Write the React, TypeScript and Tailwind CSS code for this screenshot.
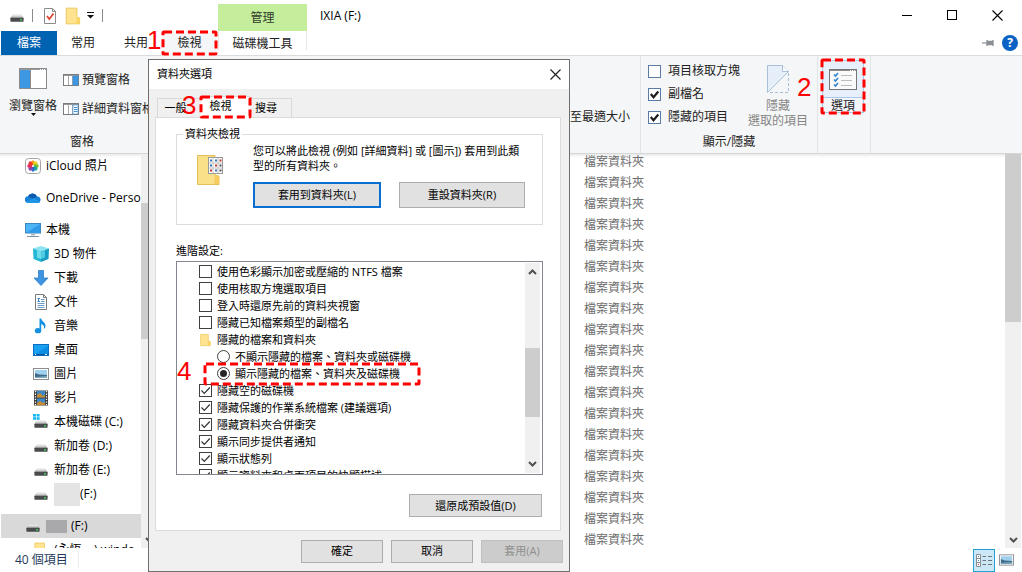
import React from "react";

function Callout({ n, className, numberClass }: { n: string; className: string; numberClass: string }) {
  return (
    <span className={`pointer-events-none absolute z-10 ${className}`}>
      <svg className="absolute inset-0 h-full w-full overflow-visible" aria-hidden="true">
        <rect width="100%" height="100%" rx="1" fill="none" stroke="#ff0000" strokeWidth="3" strokeDasharray="8 4" />
      </svg>
      <span className={`absolute font-['Liberation_Sans',sans-serif] text-[26px] leading-[26px] text-[#ff0000] ${numberClass}`}>{n}</span>
    </span>
  );
}

function DriveIcon({ windows = false }: { windows?: boolean }) {
  return (
    <svg width="16" height="16" viewBox="0 0 16 16" aria-hidden="true">
      <path d="M3.500 6.500h9l2 3h-13z" fill="#e2e2e2" />
      <path d="M2.200 8.500h11.600l.7 1.500h-13z" fill="#b4b4b4" />
      <rect x="1.400" y="9.700" width="13.200" height="4" rx=".6" fill="#4a4a4a" />
      <rect x="11" y="11.200" width="2" height="1.300" fill="#3fe05a" />
      {windows && (
        <g fill="#16b8ef">
          <rect x="0" y="0" width="3" height="2.600" />
          <rect x="3.600" y="0" width="3" height="2.600" />
          <rect x="0" y="3.200" width="3" height="2.600" />
          <rect x="3.600" y="3.200" width="3" height="2.600" />
        </g>
      )}
    </svg>
  );
}

function FolderIcon({ className = "h-4 w-4" }: { className?: string }) {
  return (
    <svg className={className} viewBox="0 0 16 16" aria-hidden="true">
      <path d="M1.900 1h9.600v8.500h2.400V15h-12z" fill="#ffe38f" stroke="#ecc65f" strokeWidth=".8" />
      <path d="M11.500 9.500h2.400V15h-3.400z" fill="#fbd467" />
    </svg>
  );
}

function PhotosIcon() {
  const petals = ["#f6a11c", "#e9d21c", "#7fbf2f", "#1fae94", "#2a6fd0", "#8446b0", "#dc2f6c", "#ee3b2a"];
  return (
    <svg width="16" height="16" viewBox="0 0 16 16" aria-hidden="true">
      <rect x=".5" y=".5" width="15" height="15" rx="3" fill="#fff" stroke="#a5a5a5" />
      {petals.map((c, i) => (
        <ellipse key={c} cx="8" cy="4.900" rx="1.900" ry="2.700" fill={c} transform={`rotate(${i * 45} 8 8)`} />
      ))}
      <circle cx="8" cy="8" r="1" fill="#fff" />
    </svg>
  );
}

function CloudIcon() {
  return (
    <svg width="16" height="16" viewBox="0 0 16 16" aria-hidden="true">
      <path d="M3.500 13a3.400 3.400 0 0 1-.5-6.800A5 5 0 0 1 12 6.500a3.300 3.300 0 0 1 1 6.500z" fill="#1582d8" />
      <path d="M3 6.200A5 5 0 0 1 12 6.500L8.500 9z" fill="#0f5bb0" />
      <path d="M1.500 12l7.500-4 6 4a3 3 0 0 1-2 1H3.500z" fill="#1f97e6" />
    </svg>
  );
}

function PcIcon() {
  return (
    <svg width="16" height="16" viewBox="0 0 16 16" aria-hidden="true">
      <rect x=".5" y="1.500" width="15" height="9.500" fill="#4db5f5" stroke="#3a86bd" />
      <path d="M1 11L15 2v9z" fill="#2f9be8" />
      <path d="M6 11.500h4v2H6z" fill="#a9b8c2" />
      <path d="M2 14h12v1H2z" fill="#7f929f" />
    </svg>
  );
}

function CubeIcon() {
  return (
    <svg width="16" height="16" viewBox="0 0 16 16" aria-hidden="true">
      <path d="M8 0l8 2.500L8 5.500 0 2.500z" fill="#8be4f0" />
      <path d="M0 2.500l8 3V16L.5 13z" fill="#27b7d6" />
      <path d="M16 2.500l-8 3V16l7.500-3z" fill="#159cc0" />
      <path d="M4 4l4 1.500V13l-4-1.500z" fill="#6fdcec" />
      <path d="M12 4L8 5.500V13l4-1.500z" fill="#4fcbe2" />
    </svg>
  );
}

function DownIcon() {
  return (
    <svg width="16" height="16" viewBox="0 0 16 16" aria-hidden="true">
      <path d="M5.500.5h5V8h4.500L8 15.500 1 8h4.500z" fill="#3e94e0" stroke="#2e7fc9" strokeWidth=".8" />
    </svg>
  );
}

function DocIcon() {
  return (
    <svg width="16" height="16" viewBox="0 0 16 16" aria-hidden="true">
      <path d="M2.500.5h8l3 3v12h-11z" fill="#fff" stroke="#7b7b7b" />
      <path d="M10.500.5v3h3" fill="none" stroke="#7b7b7b" />
      <path d="M8 5.500h3.500M8 7.500h3.500M4.500 9.500h7M4.500 11.500h7M4.500 13.500h7" stroke="#6a9cc9" />
      <path d="M4.500 4.500h2.500M4.500 7.500h2.500M5.500 4v4" stroke="#3a86c9" />
    </svg>
  );
}

function MusicIcon() {
  return (
    <svg width="16" height="16" viewBox="0 0 16 16" aria-hidden="true">
      <ellipse cx="5" cy="12.700" rx="3.200" ry="2.600" fill="#1490e0" />
      <path d="M6.500.5h1.700c.4 3 4.600 3.800 4.300 7.500-.1 1.300-.8 2.300-1.700 3 .8-3-.4-4.300-2.600-5v7H6.500z" fill="#1490e0" />
    </svg>
  );
}

function DesktopIcon() {
  return (
    <svg width="16" height="16" viewBox="0 0 16 16" aria-hidden="true">
      <rect x=".5" y="2.500" width="15" height="11" fill="#1ba1f2" stroke="#0d6fc0" />
      <path d="M1 13L15 4v9z" fill="#0c8de3" />
      <path d="M1 12.500h14" stroke="#07559b" />
      <path d="M2 12.500h1M12 12.500h2" stroke="#fff" />
    </svg>
  );
}

function PictureIcon() {
  return (
    <svg width="16" height="16" viewBox="0 0 16 16" aria-hidden="true">
      <rect x=".5" y="2.500" width="15" height="11" fill="#fff" stroke="#8b8f94" />
      <rect x="2" y="4" width="12" height="8" fill="#9fd0ee" />
      <path d="M2 7l4 1.500 8 .5v3H2z" fill="#3e6b87" />
      <path d="M2 11l12-1v2H2z" fill="#7fa7bb" />
    </svg>
  );
}

function VideoIcon() {
  return (
    <svg width="16" height="16" viewBox="0 0 16 16" aria-hidden="true">
      <rect x="1" y=".5" width="14" height="15" fill="#3b3b3b" />
      <rect x="4" y="1" width="8" height="6.500" fill="#3d88c9" />
      <rect x="4" y="8.500" width="8" height="6.500" fill="#3d88c9" />
      <path d="M4 5l3-2 3 3 2-1v2.500H4zM4 13l3-2 3 2 2-1v3H4z" fill="#c98b2b" />
      <path d="M2.500 1v14M13.500 1v14" stroke="#fff" strokeWidth="1.300" strokeDasharray="1.300 1.300" />
    </svg>
  );
}

function Chevron({ up = false }: { up?: boolean }) {
  return (
    <svg width="9" height="6" viewBox="0 0 9 6" aria-hidden="true">
      <path d={up ? "M1 5l3.500-3.500L8 5" : "M1 1l3.500 3.500L8 1"} fill="none" stroke="#505050" strokeWidth="2" />
    </svg>
  );
}

function PaneIcon({ kind }: { kind: "nav" | "preview" | "details" }) {
  if (kind === "nav") {
    return (
      <svg width="28" height="21" viewBox="0 0 28 21" aria-hidden="true">
        <rect x=".5" y=".5" width="27" height="20" fill="#fff" stroke="#8b8b8b" />
        <path d="M1 1.500h26" stroke="#9a9a9a" />
        <path d="M21 1.500h1M23 1.500h1M25 1.500h1" stroke="#fff" />
        <rect x="1" y="2" width="10" height="18" fill="#3d97e3" />
        <path d="M11.500 2v18" stroke="#8b8b8b" />
      </svg>
    );
  }
  return (
    <svg width="16" height="12" viewBox="0 0 16 12" aria-hidden="true">
      <rect x=".5" y=".5" width="15" height="11" fill="#fff" stroke="#7c7c7c" />
      <path d="M1 1.500h14" stroke="#9a9a9a" />
      <path d="M5.500 2v9M9.500 2v9" stroke="#a8a8a8" />
      <rect x="10" y="2" width="5" height="9" fill={kind === "preview" ? "#3d97e3" : "#fff"} stroke="#3d8fd6" strokeWidth=".6" />
      {kind === "details" && <path d="M11 4.500h3.500M11 6.500h3.500M11 8.500h3.500" stroke="#3d8fd6" />}
    </svg>
  );
}

function RibbonCheck({ label, checked }: { label: string; checked: boolean }) {
  return (
    <label className="flex h-4 items-center gap-[7px] whitespace-nowrap">
      <span className="grid">
        <input type="checkbox" defaultChecked={checked} className="peer col-start-1 row-start-1 h-[13px] w-[13px] appearance-none border border-[#5a7ba6] bg-white" />
        <svg width="13" height="13" viewBox="0 0 13 13" className="pointer-events-none invisible col-start-1 row-start-1 peer-checked:visible" aria-hidden="true">
          <path d="M2.800 6l2.700 3.200L10.300 3.500" fill="none" stroke="#1d1d1d" strokeWidth="2.200" />
        </svg>
      </span>
      {label}
    </label>
  );
}

type SideRow = { label: string; icon: React.ReactNode; level: number; gap?: boolean; mask?: string; selected?: boolean };

const sideRows: SideRow[] = [
  { label: "iCloud 照片", icon: <PhotosIcon />, level: 0 },
  { label: "OneDrive - Perso", icon: <CloudIcon />, level: 0, gap: true },
  { label: "本機", icon: <PcIcon />, level: 0, gap: true },
  { label: "3D 物件", icon: <CubeIcon />, level: 1 },
  { label: "下載", icon: <DownIcon />, level: 1 },
  { label: "文件", icon: <DocIcon />, level: 1 },
  { label: "音樂", icon: <MusicIcon />, level: 1 },
  { label: "桌面", icon: <DesktopIcon />, level: 1 },
  { label: "圖片", icon: <PictureIcon />, level: 1 },
  { label: "影片", icon: <VideoIcon />, level: 1 },
  { label: "本機磁碟 (C:)", icon: <DriveIcon windows />, level: 1 },
  { label: "新加卷 (D:)", icon: <DriveIcon />, level: 1 },
  { label: "新加卷 (E:)", icon: <DriveIcon />, level: 1 },
  { label: "(F:)", icon: <DriveIcon />, level: 1, mask: "h-[23px] w-[26px] bg-[#e4e4e4]" },
  { label: "(F:)", icon: <DriveIcon />, level: 0, gap: true, mask: "h-[13px] w-[21px] mr-1 bg-[#a9a9ab]", selected: true },
  { label: "(永恆 ...) windo", icon: <FolderIcon />, level: 1 },
];

function Sidebar() {
  return (
    <nav className="flex w-[157px] shrink-0 overflow-hidden" aria-label="瀏覽窗格">
      <ul className="min-w-0 flex-1 overflow-hidden pl-px">
        {sideRows.map((r, i) => (
          <li key={i} className={r.gap ? "mt-2" : ""}>
            <a
              href="#"
              className={`flex h-6 items-center gap-[5px] whitespace-nowrap ${r.level ? "pl-8" : "pl-6"} ${r.selected ? "bg-[#d9d9d9]" : ""}`}
            >
              <span className="shrink-0">{r.icon}</span>
              {r.mask ? (
                <span className="flex items-center">
                  <span className={r.mask} />
                  {r.label}
                </span>
              ) : (
                r.label
              )}
            </a>
          </li>
        ))}
      </ul>
      <div className="flex w-4 flex-col items-center bg-[#f0f0f0] pt-[49px] pb-[5px]">
        <div className="h-[136px] w-full bg-[#cdcdcd]" />
        <div className="flex-1" />
        <Chevron />
      </div>
    </nav>
  );
}

type Setting = { kind: "check" | "radio" | "folder"; label: string; on?: boolean; callout?: boolean };

const settings: Setting[] = [
  { kind: "check", label: "使用色彩顯示加密或壓縮的 NTFS 檔案" },
  { kind: "check", label: "使用核取方塊選取項目" },
  { kind: "check", label: "登入時還原先前的資料夾視窗" },
  { kind: "check", label: "隱藏已知檔案類型的副檔名" },
  { kind: "folder", label: "隱藏的檔案和資料夾" },
  { kind: "radio", label: "不顯示隱藏的檔案、資料夾或磁碟機" },
  { kind: "radio", label: "顯示隱藏的檔案、資料夾及磁碟機", on: true, callout: true },
  { kind: "check", label: "隱藏空的磁碟機", on: true },
  { kind: "check", label: "隱藏保護的作業系統檔案 (建議選項)", on: true },
  { kind: "check", label: "隱藏資料夾合併衝突", on: true },
  { kind: "check", label: "顯示同步提供者通知", on: true },
  { kind: "check", label: "顯示狀態列", on: true },
  { kind: "check", label: "顯示資料夾和桌面項目的快顯描述", on: true },
];

function SettingRow({ s }: { s: Setting }) {
  if (s.kind === "folder") {
    return (
      <li className="flex h-[17px] items-center gap-[5px] pl-[22px]">
        <FolderIcon className="h-[14px] w-[13px]" />
        {s.label}
      </li>
    );
  }
  const radio = s.kind === "radio";
  return (
    <li className="relative">
      <label className={`flex h-[17px] items-center gap-[5px] whitespace-nowrap ${radio ? "pl-10" : "pl-[22px]"}`}>
        <span className="grid">
          <input
            type={radio ? "radio" : "checkbox"}
            name={radio ? "hidden-files" : undefined}
            defaultChecked={s.on}
            className={`peer col-start-1 row-start-1 h-[13px] w-[13px] appearance-none border border-[#404040] bg-white ${radio ? "rounded-full" : ""}`}
          />
          <svg width="13" height="13" viewBox="0 0 13 13" className="pointer-events-none invisible col-start-1 row-start-1 peer-checked:visible" aria-hidden="true">
            {radio ? <circle cx="6.500" cy="6.500" r="3.500" fill="#262626" /> : <path d="M2.500 6.500l2.800 2.800L10.800 3.500" fill="none" stroke="#333" strokeWidth="1.200" />}
          </svg>
        </span>
        {s.label}
      </label>
      {s.callout && <Callout n="4" className="-top-px left-7 h-5 w-[214px]" numberClass="-left-7 -top-[6px]" />}
    </li>
  );
}

function DialogButton({ children, className = "", disabled = false }: { children: React.ReactNode; className?: string; disabled?: boolean }) {
  return (
    <button
      type="button"
      disabled={disabled}
      className={`flex items-center justify-center whitespace-nowrap ${disabled ? "border border-[#bfbfbf] bg-[#cccccc] text-[#8f8f8f]" : "bg-[#e1e1e1]"} ${className}`}
    >
      {children}
    </button>
  );
}

function OptionsDialog() {
  return (
    <section role="dialog" aria-labelledby="dlg-title" className="absolute top-[59px] bottom-0 left-[148px] z-20 flex w-[422px] flex-col border border-[#6f6f6f] bg-[#f0f0f0] text-[11px] leading-4">
      <header className="flex h-[29px] shrink-0 items-center justify-between bg-white px-2 pb-px">
        <h2 id="dlg-title">資料夾選項</h2>
        <button type="button" aria-label="關閉" className="flex h-4 w-3 items-center justify-center">
          <svg width="11" height="11" viewBox="0 0 11 11" aria-hidden="true">
            <path d="M.5.5l10 10M10.500.5l-10 10" stroke="#222" strokeWidth="1.200" />
          </svg>
        </button>
      </header>
      <div role="tablist" className="flex h-7 shrink-0 items-end pl-2">
        <button role="tab" type="button" className="h-[19px] w-11 border-t border-l border-[#d9d9d9] pr-2">一般</button>
        <button role="tab" type="button" aria-selected="true" className="relative z-10 -mb-px h-[22px] w-[49px] border-t border-[#d9d9d9] bg-white pr-[10px] pb-[3px]">
          檢視
          <Callout n="3" className="top-0 left-0 h-5 w-[49px]" numberClass="-left-[19px] -top-[5px]" />
        </button>
        <button role="tab" type="button" className="h-[19px] w-[42px] border-t border-r border-[#d9d9d9] pr-[9px]">搜尋</button>
      </div>
      <div className="mr-2 ml-[6px] flex min-h-0 flex-1 flex-col border border-[#dcdcdc] bg-white pt-2 pr-[17px] pl-5">
        <fieldset className="h-[99px] border border-[#dcdcdc] pr-[17px] pl-5">
          <legend className="-ml-[14px] px-[2px] leading-4">資料夾檢視</legend>
          <div className="flex gap-[30px] pt-px">
            <svg width="26" height="30" viewBox="0 0 26 30" className="mt-3 shrink-0" aria-hidden="true">
              <path d="M.5.5H18v20l4 .5v8.500H.5z" fill="#fbe08a" stroke="#e3bd55" />
              <path d="M18 20.500l4 .5v8h-5z" fill="#f6cc5e" />
              <rect x="11.500" y="2.500" width="14" height="16" fill="#fff" stroke="#9a9a9a" />
              <path d="M16 3v15M21 3v15M12 8h13M12 13h13" stroke="#b5b5b5" strokeWidth=".8" />
              <path d="M13 5.500h2M18 5.500h2M13 10.500h2M18 15.500h2" stroke="#3a74b8" strokeWidth="2" />
              <path d="M22.500 5.500h2M18 10.500h2M13 15.500h2" stroke="#c0392b" strokeWidth="2" />
              <path d="M22.500 10.500h2M22.500 15.500h2" stroke="#555" strokeWidth="2" />
            </svg>
            <div className="min-w-0 flex-1">
              <p className="leading-[15px] whitespace-nowrap">
                您可以將此檢視 (例如 [詳細資料] 或 [圖示]) 套用到此類
                <br />
                型的所有資料夾。
              </p>
              <div className="mt-[9px] flex gap-[18px]">
                <DialogButton className="h-[26px] flex-1 border-2 border-[#0a6fd0]">套用到資料夾(L)</DialogButton>
                <DialogButton className="h-[26px] flex-1 border border-[#adadad]">重設資料夾(R)</DialogButton>
              </div>
            </div>
          </div>
        </fieldset>
        <p className="mt-[18px] mb-[2px]">進階設定:</p>
        <div className="flex h-[214px] shrink-0 overflow-hidden border border-[#828790]">
          <ul className="min-w-0 flex-1 pt-px">
            {settings.map((s) => (
              <SettingRow key={s.label} s={s} />
            ))}
          </ul>
          <div className="my-px mr-[2px] flex w-[15px] flex-col items-center bg-[#f0f0f0] py-[6px]">
            <Chevron up />
            <div className="h-[73px]" />
            <div className="h-[69px] w-full bg-[#cdcdcd]" />
            <div className="flex-1" />
            <Chevron />
          </div>
        </div>
        <DialogButton className="mt-[19px] mr-px h-[23px] w-[133px] self-end border border-[#adadad]">還原成預設值(D)</DialogButton>
      </div>
      <footer className="flex h-10 shrink-0 items-center justify-end gap-2 pr-[6px]">
        <DialogButton className="h-[23px] w-[82px] border border-[#adadad]">確定</DialogButton>
        <DialogButton className="h-[23px] w-[82px] border border-[#adadad]">取消</DialogButton>
        <DialogButton disabled className="h-[23px] w-[82px]">套用(A)</DialogButton>
      </footer>
    </section>
  );
}

function TitleBar() {
  return (
    <header className="flex h-[31px] shrink-0">
      <div className="flex w-[218px] items-center pl-[9px]">
        <DriveIcon />
        <span className="ml-[7px] h-[13px] w-px bg-[#8c8c8c]" />
        <svg width="12" height="16" viewBox="0 0 12 16" className="ml-[11px]" aria-hidden="true">
          <path d="M.5.5h8l3 3v12H.5z" fill="#fff" stroke="#8a8a8a" />
          <path d="M8.500.5v3h3" fill="none" stroke="#8a8a8a" />
          <path d="M3 8l2.300 3L9.500 5.500" fill="none" stroke="#e0412f" strokeWidth="1.700" />
        </svg>
        <FolderIcon className="ml-2 h-[18px] w-[18px]" />
        <svg width="7" height="7" viewBox="0 0 7 7" className="ml-[5px]" aria-hidden="true">
          <path d="M0 .5h7" stroke="#111" />
          <path d="M0 3h7L3.500 6.500z" fill="#111" />
        </svg>
        <span className="ml-2 h-[13px] w-px bg-[#8c8c8c]" />
      </div>
      <div className="mt-1 flex w-[89px] items-center justify-center bg-[#c4ee9c] text-[#2f3b28]">管理</div>
      <h1 className="flex items-center pl-[13px]">IXIA (F:)</h1>
      <div className="ml-auto flex items-center gap-[34px] pr-[19px]">
        <button type="button" aria-label="最小化">
          <svg width="11" height="11" viewBox="0 0 11 11" aria-hidden="true"><path d="M0 5.500h10" stroke="#000" /></svg>
        </button>
        <button type="button" aria-label="最大化">
          <svg width="11" height="11" viewBox="0 0 11 11" aria-hidden="true"><rect x=".5" y=".5" width="9" height="9" fill="none" stroke="#000" /></svg>
        </button>
        <button type="button" aria-label="關閉">
          <svg width="11" height="11" viewBox="0 0 11 11" aria-hidden="true"><path d="M.5.5l10 10M10.500.5l-10 10" stroke="#000" strokeWidth="1.100" /></svg>
        </button>
      </div>
    </header>
  );
}

function TabBar() {
  return (
    <nav className="flex h-[25px] shrink-0 border-b border-[#dadbdc] text-[#222]">
      <button type="button" className="ml-px w-14 bg-[#0063b1] text-white">檔案</button>
      <button type="button" className="w-[52px]">常用</button>
      <button type="button" className="w-[54px]">共用</button>
      <button type="button" className="relative -mb-px w-[53px] bg-[#f5f6f7] pb-px">
        檢視
        <Callout n="1" className="inset-x-0 top-px bottom-[2px]" numberClass="-left-4 -top-[5px]" />
      </button>
      <button type="button" className="mb-[5px] ml-[2px] w-[89px] border-x border-[#e6e6e6] pt-[5px]">磁碟機工具</button>
      <div className="ml-auto flex items-center gap-2 pr-1">
        <button type="button" aria-label="釘選功能區">
          <svg width="12" height="8" viewBox="0 0 12 8" aria-hidden="true">
            <path d="M0 4h5" stroke="#8a8f94" strokeWidth="1.200" />
            <path d="M5 1v6M5 2.500h6v3H5M11 1v6" fill="#8a8f94" stroke="#8a8f94" strokeWidth="1.300" />
          </svg>
        </button>
        <button type="button" aria-label="說明" className="flex h-4 w-4 items-center justify-center rounded-full bg-[#0a62c4] font-bold text-white">?</button>
      </div>
    </nav>
  );
}

function Ribbon() {
  return (
    <div className="flex h-[98px] shrink-0 border-b border-[#d5d6d7] bg-[#f5f6f7] text-[#222] shadow-[0_2px_2px_rgba(0,0,0,0.08)]">
      <section className="flex w-[148px] shrink-0 flex-col overflow-hidden">
        <div className="flex flex-1 pl-[9px]">
          <button type="button" className="flex w-12 shrink-0 flex-col items-center pt-3 whitespace-nowrap">
            <PaneIcon kind="nav" />
            <span className="mt-[9px]">瀏覽窗格</span>
            <svg width="5" height="3" viewBox="0 0 5 3" className="-mt-px" aria-hidden="true"><path d="M0 0h5L2.500 3z" fill="#111" /></svg>
          </button>
          <div className="ml-[6px] flex flex-col gap-[13px] pt-4">
            <button type="button" className="flex h-4 items-center gap-[3px] whitespace-nowrap"><PaneIcon kind="preview" />預覽窗格</button>
            <button type="button" className="flex h-4 items-center gap-[3px] whitespace-nowrap"><PaneIcon kind="details" />詳細資料窗格</button>
          </div>
        </div>
        <p className="h-[19px] pl-[70px]">窗格</p>
      </section>
      <section className="flex w-[493px] shrink-0 justify-end border-r border-[#e2e3e4] pt-[53px] pr-[10px]">
        <button type="button" className="h-4 whitespace-nowrap">至最適大小</button>
      </section>
      <section className="flex w-[177px] shrink-0 flex-col border-r border-[#e2e3e4]">
        <div className="flex flex-1 pl-[7px]">
          <div className="flex flex-col gap-[7px] pt-[7px]">
            <RibbonCheck label="項目核取方塊" checked={false} />
            <RibbonCheck label="副檔名" checked />
            <RibbonCheck label="隱藏的項目" checked />
          </div>
          <button type="button" disabled className="ml-2 flex flex-col items-center pt-[9px] leading-[15px] whitespace-nowrap text-[#858585]">
            <svg width="22" height="28" viewBox="0 0 22 28" aria-hidden="true">
              <path d="M.5 27.500V.5h15l6 6z" fill="#e6eff9" />
              <path d="M.5 27.500V.5h15l6 6L.5 27.500" fill="none" stroke="#a9bfd8" />
              <path d="M15.500.5v6h6" fill="#fff" stroke="#a9bfd8" />
              <path d="M21.500 8v19.500H.5" fill="none" stroke="#a9bfd8" strokeDasharray="3 2" />
            </svg>
            <span className="mt-[5px]">隱藏</span>
            <span>選取的項目</span>
          </button>
        </div>
        <p className="h-[19px] text-center">顯示/隱藏</p>
      </section>
      <section className="w-[53px] shrink-0 border-r border-[#e2e3e4] pt-1 pl-1">
        <button type="button" className="relative flex h-[53px] w-[42px] flex-col items-center border border-[#a9c9ee] bg-[#f2f6fb]">
          <span className="flex h-[37px] w-full shrink-0 items-center justify-center border-b border-[#a9c9ee] bg-[#e6effa]">
            <svg width="28" height="21" viewBox="0 0 28 21" aria-hidden="true">
              <rect x=".5" y=".5" width="27" height="20" fill="#fafafa" stroke="#777" />
              <path d="M1 1.500h26" stroke="#8a8a8a" />
              <path d="M21 1.500h1M23 1.500h1M25 1.500h1" stroke="#fff" />
              <path d="M5 5.500l1.500 1.500L9 4M5 10.500l1.500 1.500L9 9M5 15.500l1.500 1.500L9 14" fill="none" stroke="#3484cf" strokeWidth="1.600" />
              <path d="M12 6.500h11M12 11.500h11M12 16.500h11" stroke="#bdbdbd" />
            </svg>
          </span>
          <span className="leading-[15px]">選項</span>
          <Callout n="2" className="-inset-px" numberClass="-left-[25px] top-[14px]" />
        </button>
      </section>
    </div>
  );
}

export default function App() {
  return (
    <div className="relative flex h-screen flex-col overflow-hidden bg-white font-['Open_Sans','Noto_Sans_CJK_TC',sans-serif] text-[12px] leading-4 text-black">
      <TitleBar />
      <TabBar />
      <Ribbon />
      <main className="flex min-h-0 flex-1">
        <Sidebar />
        <ul className="min-w-0 flex-1 overflow-hidden pl-[427px] text-[#6d6d6d]">
          {Array.from({ length: 19 }, (_, i) => (
            <li key={i} className="h-[21px] leading-[15px]">檔案資料夾</li>
          ))}
        </ul>
        <div className="mr-px flex w-4 flex-col items-center bg-[#f0f0f0] pb-[5px]">
          <div className="h-[168px] w-full bg-[#cdcdcd]" />
          <div className="flex-1" />
          <Chevron />
        </div>
      </main>
      <footer className="flex h-6 shrink-0 items-center justify-between pr-2 pl-[15px] text-[#1e395b]">
        <span className="border-r border-[#ececec] pr-[10px]">40 個項目</span>
        <div className="flex items-center gap-1">
          <button type="button" aria-label="詳細資料" className="flex h-[23px] w-[22px] items-center justify-center border border-[#26a0da] bg-[#cce8f7]">
            <svg width="16" height="13" viewBox="0 0 16 13" aria-hidden="true">
              <path d="M.5.5h4v12h-4zM.5 4.500h4M.5 8.500h4" fill="#fff" stroke="#8b8f94" />
              <path d="M2 2.500h1M2 6.500h1" stroke="#3a86c9" />
              <path d="M2 10.500h1" stroke="#d33" />
              <path d="M6.500 2.500h3.500M12 2.500h4M6.500 6.500h3.500M12 6.500h4M6.500 10.500h3.500M12 10.500h4" stroke="#6d747a" />
            </svg>
          </button>
          <button type="button" aria-label="大圖示" className="flex h-[23px] w-[15px] items-center justify-center">
            <PictureIcon />
          </button>
        </div>
      </footer>
      <OptionsDialog />
    </div>
  );
}
